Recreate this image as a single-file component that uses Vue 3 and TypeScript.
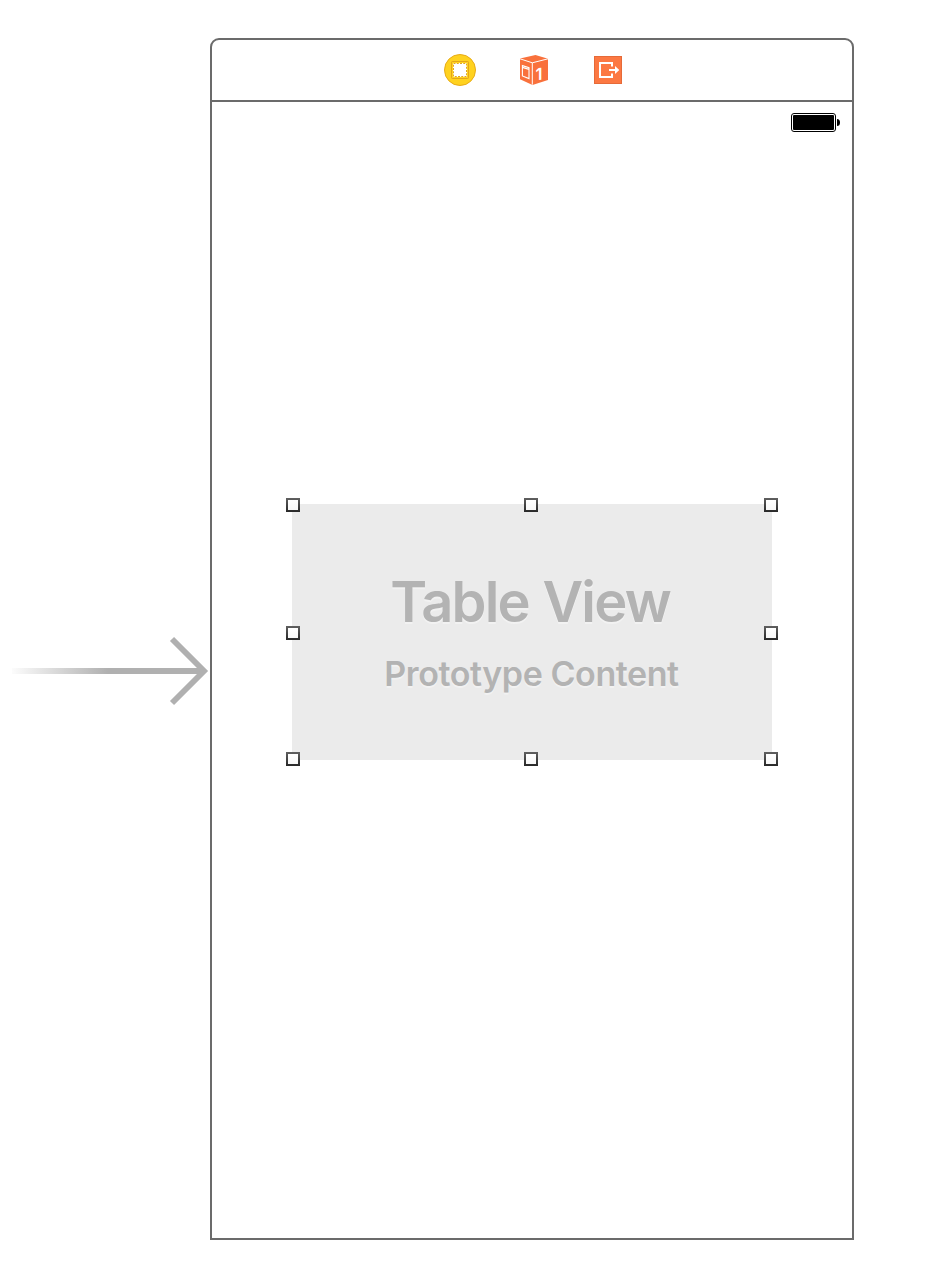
<script setup lang="ts">
interface Handle {
  id: string
  place: string
}

const handles: Handle[] = [
  { id: 'nw', place: 'left top' },
  { id: 'n', place: 'center top' },
  { id: 'ne', place: 'right top' },
  { id: 'w', place: 'left middle' },
  { id: 'e', place: 'right middle' },
  { id: 'sw', place: 'left bottom' },
  { id: 's', place: 'center bottom' },
  { id: 'se', place: 'right bottom' },
]
</script>

<template>
  <main class="canvas">
    <svg class="entry-arrow" width="198" height="70" viewBox="0 0 198 70">
      <defs>
        <linearGradient id="arrow-fade" gradientUnits="userSpaceOnUse" x1="0" y1="0" x2="96" y2="0">
          <stop offset="0" stop-color="#b0b0b0" stop-opacity="0.04" />
          <stop offset="1" stop-color="#b0b0b0" />
        </linearGradient>
      </defs>
      <rect x="0" y="32" width="190" height="6" fill="url(#arrow-fade)" />
      <path d="M160 3 L192 35 L160 67" fill="none" stroke="#b0b0b0" stroke-width="5.8" />
    </svg>

    <section class="scene">
      <header class="dock">
        <svg width="48" height="48" viewBox="0 0 48 48">
          <circle cx="24" cy="24" r="15.5" fill="#ffd21f" stroke="#e8ac18" />
          <rect x="15.5" y="15.5" width="17" height="17" rx="1" fill="#fbc51c" stroke="#e3a51a" />
          <rect x="16" y="16" width="16" height="16" fill="#ffd21f" />
          <rect x="17" y="17" width="14" height="14" fill="#fff" />
          <rect x="17.5" y="17.5" width="13" height="13" fill="none" stroke="#e0a823" stroke-dasharray="2 1.25" />
        </svg>
        <svg width="48" height="48" viewBox="0 0 48 48">
          <path d="M10 12.6 L25.5 9 L38 12.8 V34 L22.5 39 L10 33.3 Z" fill="#f9713c" />
          <path d="M10 12.8 L22.3 16.8 L38 12.8 M22.3 16.8 V38.7" fill="none" stroke="#fff" stroke-width="1" />
          <path d="M12.4 19.6 L19 21.6 V32.6 L12.4 30 Z M12.4 21.4 L19 23.4" fill="none" stroke="#fff" stroke-width="1.1" />
          <text x="25.6" y="38" class="cube-digit" transform="skewY(-8)">1</text>
        </svg>
        <svg width="48" height="48" viewBox="0 0 48 48">
          <rect x="10.5" y="10.5" width="27" height="27" fill="#fc7842" stroke="#e66a38" />
          <path d="M28 20.5 V17 H16 V31 H28 V27.5" fill="none" stroke="#fff" stroke-width="2" />
          <path d="M25 23 H31 V20 L35.3 24 L31 28 V25 H25 Z" fill="#fff" />
        </svg>
      </header>

      <div class="screen">
        <div class="status">
          <svg width="50" height="20" viewBox="0 0 50 20">
            <rect x="0.5" y="0.5" width="44" height="18" rx="2.5" fill="#fff" stroke="#000" />
            <rect x="2" y="2" width="41" height="15" rx="1" fill="#000" />
            <path d="M46 6 Q49 6 49 9.5 Q49 13 46 13 Z" fill="#000" />
          </svg>
        </div>

        <div class="table-view">
          <h1 class="title">Table View</h1>
          <p class="subtitle">Prototype Content</p>
          <i v-for="h in handles" :key="h.id" class="handle" :class="h.place"></i>
        </div>
      </div>
    </section>
  </main>
</template>

<style>
body {
  margin: 0;
  background: #fff;
}
</style>

<style scoped>
.canvas {
  box-sizing: border-box;
  width: 932px;
  height: 1270px;
  padding: 38px 0 0 12px;
  display: flex;
  align-items: flex-start;
  overflow: hidden;
  font-family: Inter, "Liberation Sans", sans-serif;
}

.entry-arrow {
  flex: none;
  margin-top: 598px;
}

.scene {
  flex: none;
  box-sizing: border-box;
  width: 644px;
  height: 1202px;
  border: 2px solid #6b6b6b;
  border-radius: 9px 9px 0 0;
  display: flex;
  flex-direction: column;
}

.dock {
  height: 60px;
  flex: none;
  border-bottom: 2px solid #6b6b6b;
  display: flex;
  justify-content: center;
  align-items: center;
  gap: 26px;
  padding-left: 4px;
}

.dock svg {
  display: block;
}

.cube-digit {
  font: 600 16.5px Inter, "Liberation Sans", sans-serif;
  fill: #fff;
}

.screen {
  flex: 1;
  display: flex;
  flex-direction: column;
  align-items: center;
}

.status {
  align-self: flex-end;
  height: 20px;
  padding: 11px 11px 0 0;
}

.status svg {
  display: block;
}

.table-view {
  position: relative;
  box-sizing: border-box;
  width: 480px;
  height: 256px;
  margin-top: 371px;
  padding-top: 64px;
  background: #ebebeb;
  color: #b3b3b3;
  text-align: center;
  text-shadow: 0 2px 0 #f2f2f2;
  white-space: nowrap;
}

.title {
  margin: 0;
  padding-right: 4px;
  font-size: 56px;
  line-height: 68px;
  font-weight: 600;
  letter-spacing: -1.8px;
  word-spacing: 1.2px;
}

.subtitle {
  margin: 17px 0 0;
  padding-right: 1px;
  font-size: 34px;
  line-height: 41px;
  font-weight: 600;
  letter-spacing: -0.42px;
}

.handle {
  position: absolute;
  box-sizing: border-box;
  width: 14px;
  height: 14px;
  background: linear-gradient(#fff, #f8f8f8) padding-box, linear-gradient(#606060, #282828) border-box;
  border: 2px solid transparent;
}

.left { left: -6px; }
.center { left: 232px; }
.right { right: -6px; }
.top { top: -6px; }
.middle { top: 122px; }
.bottom { bottom: -6px; }
</style>
